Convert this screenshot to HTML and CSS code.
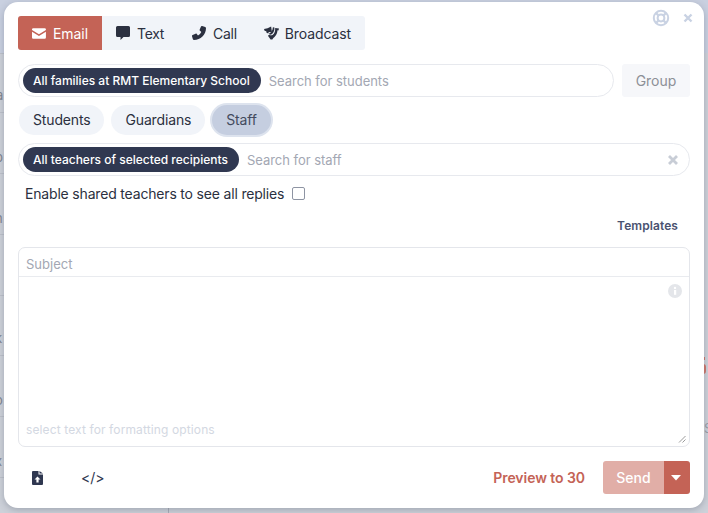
FILE: index.html
```html
<!DOCTYPE html>
<html lang="en">
<head>
<meta charset="utf-8">
<title>Compose message</title>
<link rel="stylesheet" href="styles.css">
</head>
<body>
<div class="backdrop" aria-hidden="true">
  <span class="bg-top"></span>
  <span class="bg-line bl1"></span><span class="bg-line bl2"></span><span class="bg-line bl3"></span><span class="bg-line bl4"></span><span class="bg-line bl5"></span><span class="bg-line bl6"></span><span class="bg-line bl7"></span><span class="bg-line bl8"></span>
  <span class="bg-letter g1">a</span><span class="bg-letter g2">p</span><span class="bg-letter g3">h</span><span class="bg-letter g4">k</span><span class="bg-letter g5">o</span><span class="bg-letter g6">x</span>
  <span class="bg-red"></span><span class="bg-dot"></span>
  <span class="bg-letter g7">S</span>
  <span class="bg-divider"></span>
</div>
<main class="modal">
  <div class="top-icons">
    <svg class="help" viewBox="0 0 18 18" width="18" height="18"><circle cx="9" cy="9" r="7.200" fill="none" stroke="#c9d2e3" stroke-width="2"/><circle cx="9" cy="9" r="3.400" fill="none" stroke="#c9d2e3" stroke-width="2"/><path d="M4 4l3 3M14 4l-3 3M4 14l3-3M14 14l-3-3" stroke="#c9d2e3" stroke-width="2.400"/></svg>
    <svg class="close" viewBox="0 0 10 10" width="10" height="10"><path d="M1.500 1.500l7 7M8.500 1.500l-7 7" stroke="#c9d2e3" stroke-width="2.400"/></svg>
  </div>
  <nav class="tabs">
    <div class="tab active">
      <svg viewBox="0 0 16 12" width="14" height="11"><path d="M1.500 0h13A1.500 1.500 0 0 1 16 1.500v.6L8 7 0 2.100v-.6A1.500 1.500 0 0 1 1.500 0zM0 3.900l8 4.900 8-4.900v6.600a1.500 1.500 0 0 1-1.500 1.500h-13A1.500 1.500 0 0 1 0 10.500z" fill="#fff"/></svg>
      Email
    </div>
    <div class="tab tab-text">
      <svg viewBox="0 0 14 14" width="14" height="14"><path d="M1.500 0h11A1.500 1.500 0 0 1 14 1.500v8a1.500 1.500 0 0 1-1.500 1.500H7.500L4.500 14v-3h-3A1.500 1.500 0 0 1 0 9.500v-8A1.500 1.500 0 0 1 1.500 0z" fill="#2b3040"/></svg>
      Text
    </div>
    <div class="tab tab-call">
      <svg viewBox="0 0 14 14" width="14" height="14"><path d="M10.200 0l3 .9c.5.200.800.600.800 1.100C14 8.700 8.700 14 2 14c-.5 0-.9-.3-1.100-.8L0 10.200c-.1-.5.100-1 .6-1.200l3-1.300c.4-.2.900-.1 1.200.3l1.200 1.500c1.500-.8 2.600-2 3.300-3.400L8 4.800c-.4-.3-.5-.8-.3-1.200L9 .6c.2-.5.700-.7 1.200-.6z" fill="#2b3040"/></svg>
      Call
    </div>
    <div class="tab tab-cast">
      <svg viewBox="0 0 16 14" width="15" height="14"><path d="M0 2.600L3.800 2 7.600 0l.9 6.200-3.400-.3-.5 1.500-1.900-.6-.3-1.600L.6 4.600z" fill="#2b3040"/><path d="M9.500 .8l1.600.2c.2 2.600-.4 4.800-2 6.400-.9.800-2 1.300-3.100 1.400l-.5-1.500c2-.4 3.800-2.800 4-6.500z" fill="#2b3040"/><path d="M11.900 1.600L16 2.200l-.6 2-1-.1c-.2 3.100-1.200 5.400-3.200 7.100-.9.800-1.600 1.400-2.300 2.800l-1.900-.2L4.200 10l1.300-1.200c1.100.8 2.400.8 3.600.2 2.300-1.400 3-4.200 2.800-7.400z" fill="#2b3040"/></svg>
      Broadcast
    </div>
  </nav>
  <div class="search-row">
    <div class="field grow">
      <span class="pill">All families at RMT Elementary School</span>
      <span class="placeholder">Search for students</span>
    </div>
    <button class="group-btn">Group</button>
  </div>
  <div class="chips">
    <span class="chip">Students</span>
    <span class="chip">Guardians</span>
    <span class="chip selected">Staff</span>
  </div>
  <div class="field staff">
    <span class="pill">All teachers of selected recipients</span>
    <span class="placeholder grow">Search for staff</span>
    <svg class="clear" viewBox="0 0 12 12" width="12" height="12"><path d="M2 2l8 8M10 2l-8 8" stroke="#c8cdd6" stroke-width="2.800"/></svg>
  </div>
  <label class="shared">Enable shared teachers to see all replies <span class="checkbox"></span></label>
  <div class="templates">Templates</div>
  <section class="editor">
    <div class="subject">Subject</div>
    <div class="body">
      <svg class="info" viewBox="0 0 14 14" width="14" height="14"><circle cx="7" cy="7" r="7" fill="#e4e6ea"/><rect x="6" y="6" width="2.200" height="4.800" fill="#fff"/><circle cx="7" cy="3.900" r="1.200" fill="#fff"/></svg>
      <div class="hint">select text for formatting options</div>
      <svg class="grip" viewBox="0 0 8 8" width="8" height="8"><path d="M1 7.500L7.500 1M4.500 7.500L7.500 4.500" stroke="#9a9a9a" stroke-width="1"/></svg>
    </div>
  </section>
  <footer class="footer">
    <svg class="upload" viewBox="0 0 11 14" width="11" height="14"><path d="M1 0h5.500v3.500H11V13a1 1 0 0 1-1 1H1a1 1 0 0 1-1-1V1a1 1 0 0 1 1-1z" fill="#2f3750"/><path d="M7.500 0L11 2.600H7.500z" fill="#2f3750"/><path d="M5.500 5.500L8.500 8.600H6.600V11.500H4.400V8.600H2.500z" fill="#fff"/></svg>
    <span class="code">&lt;/&gt;</span>
    <span class="preview">Preview to 30</span>
    <div class="send">
      <span class="send-main">Send</span>
      <span class="send-arrow"><svg viewBox="0 0 10 6" width="10" height="6"><path d="M0 0h10L5 5.500z" fill="#fff"/></svg></span>
    </div>
  </footer>
</main>
</body>
</html>
```
FILE: styles.css
```css
* { box-sizing: border-box; }
html, body { margin: 0; height: 513px; overflow: hidden; }
body {
  background: #cdd1d9;
  font-family: Inter, "Liberation Sans", sans-serif;
  font-size: 14px;
  color: #2b3040;
  padding: 2px 4px 5px 4px;
  position: relative;
}
.backdrop { position: absolute; inset: 0; overflow: hidden; }
.bg-top { position: absolute; left: 0; top: 0; width: 100%; height: 53px; background: #c9d0e0; }
.bg-line { position: absolute; left: 0; width: 6px; height: 1px; background: #bdc1ca; }
.bl1 { top: 53px; }
.bl2 { top: 112px; }
.bl3 { top: 173px; }
.bl4 { top: 234px; }
.bl5 { top: 295px; }
.bl6 { top: 355px; }
.bl7 { top: 416px; }
.bl8 { top: 477px; }
.bg-letter { position: absolute; color: #81858f; font-size: 13px; line-height: 14px; }
.g1 { left: -4px; top: 88px; }
.g2 { left: -5px; top: 150px; }
.g3 { left: -5px; top: 211px; }
.g4 { left: -5px; top: 331px; }
.g5 { left: -5px; top: 393px; }
.g6 { left: -5px; top: 454px; }
.g7 { left: 704px; top: 421px; color: #9a9ea8; }
.bg-red { position: absolute; left: 703px; top: 364px; width: 3px; height: 10px; border-radius: 0 3px 3px 0; background: #d0776c; }
.bg-dot { position: absolute; left: 704px; top: 357px; width: 1px; height: 3px; background: #d0776c; }
.bg-divider { position: absolute; left: 168px; top: 505px; width: 1px; height: 8px; background: #a8acb6; }
.modal {
  position: relative;
  height: 506px;
  width: 700px;
  background: #fff;
  border-radius: 14px;
  padding: 14px 14px 0 14px;
  box-shadow: 0 2px 7px rgba(60, 70, 90, .3);
}
.top-icons {
  position: absolute;
  right: 11px;
  top: 7px;
  display: flex;
  align-items: center;
  gap: 13px;
}
.top-icons svg { display: block; }
.tabs {
  display: inline-flex;
  height: 34px;
  background: #f1f4f9;
  border-radius: 3px;
  vertical-align: top;
  letter-spacing: -.05px;
}
.tab {
  display: flex;
  align-items: center;
  gap: 7px;
  padding: 0 14px;
}
.tab.active {
  background: #c46356;
  color: #fff;
  width: 84px;
  border-radius: 3px 0 0 3px;
}
.tab-text { letter-spacing: -.3px; }
.tab-call { letter-spacing: -.3px; }
.tab-cast { padding: 0 14px 0 13px; gap: 6px; letter-spacing: -.1px; }
.search-row { display: flex; gap: 8px; margin-top: 14px; height: 33px; }
.grow { flex: 1; }
.field {
  display: flex;
  align-items: center;
  gap: 8px;
  height: 33px;
  border: 1px solid #e7e9ee;
  border-radius: 17px;
  padding: 0 8px 0 4px;
  background: #fff;
}
.pill {
  display: flex;
  align-items: center;
  height: 25px;
  padding: 0 11px 0 10px;
  border-radius: 13px;
  background: #303851;
  color: #fff;
  font-size: 12px;
  font-weight: 500;
  white-space: nowrap;
}
.placeholder { color: #a3a7b3; font-size: 13px; letter-spacing: -.03px; }
.group-btn {
  width: 68px;
  height: 33px;
  border: 0;
  border-radius: 3px;
  background: #f6f7fa;
  color: #8d9097;
  font: inherit;
}
.chips { display: flex; gap: 7px; margin: 8px 0 0 1px; height: 30px; letter-spacing: -.15px; }
.chip {
  display: flex;
  align-items: center;
  padding: 0 14px 1px;
  border-radius: 15px;
  background: #f1f4f9;
  color: #2b3040;
}
.chip.selected {
  background: #c5cee0;
  color: #434b5e;
  box-shadow: 0 0 0 2px #dde3ee;
}
.staff { margin-top: 8px; padding-right: 10px; }
.shared {
  display: flex;
  align-items: center;
  gap: 8px;
  height: 20px;
  margin: 7px 0 0 7px;
  letter-spacing: -.18px;
}
.checkbox {
  width: 13px;
  height: 13px;
  border: 1px solid #8e94a3;
  border-radius: 2px;
}
.templates {
  margin-top: 15px;
  padding-right: 12px;
  height: 16px;
  line-height: 16px;
  text-align: right;
  font-size: 12px;
  font-weight: 600;
  color: #4a5270;
  letter-spacing: .08px;
}
.editor {
  margin-top: 13px;
  height: 200px;
  border: 1px solid #e4e6eb;
  border-radius: 7px;
  display: flex;
  flex-direction: column;
}
.subject {
  height: 29px;
  flex: none;
  padding: 4px 7px 0;
  display: flex;
  align-items: center;
  border-bottom: 1px solid #e9ebef;
  color: #a3a7b3;
  font-size: 13px;
}
.body { position: relative; flex: 1; }
.info { position: absolute; right: 7px; top: 7px; }
.hint {
  position: absolute;
  left: 7px;
  bottom: 8px;
  font-size: 12px;
  line-height: 16px;
  color: #d3d8e2;
  letter-spacing: .12px;
}
.grip { position: absolute; right: 3px; bottom: 3px; }
.footer {
  display: flex;
  align-items: center;
  height: 33px;
  margin-top: 14px;
}
.upload { margin-left: 14px; }
.code { margin-left: 38px; font-size: 14px; color: #2f3750; }
.preview { margin-left: auto; margin-right: 18px; font-weight: 600; color: #c46356; letter-spacing: -.06px; }
.send { display: flex; height: 33px; border-radius: 3px; overflow: hidden; }
.send-main {
  width: 61px;
  display: flex;
  align-items: center;
  justify-content: center;
  background: #e1aea7;
  color: #fff;
  font-weight: 500;
}
.send-arrow {
  width: 26px;
  padding-right: 2px;
  display: flex;
  align-items: center;
  justify-content: center;
  background: #c46356;
}
```
